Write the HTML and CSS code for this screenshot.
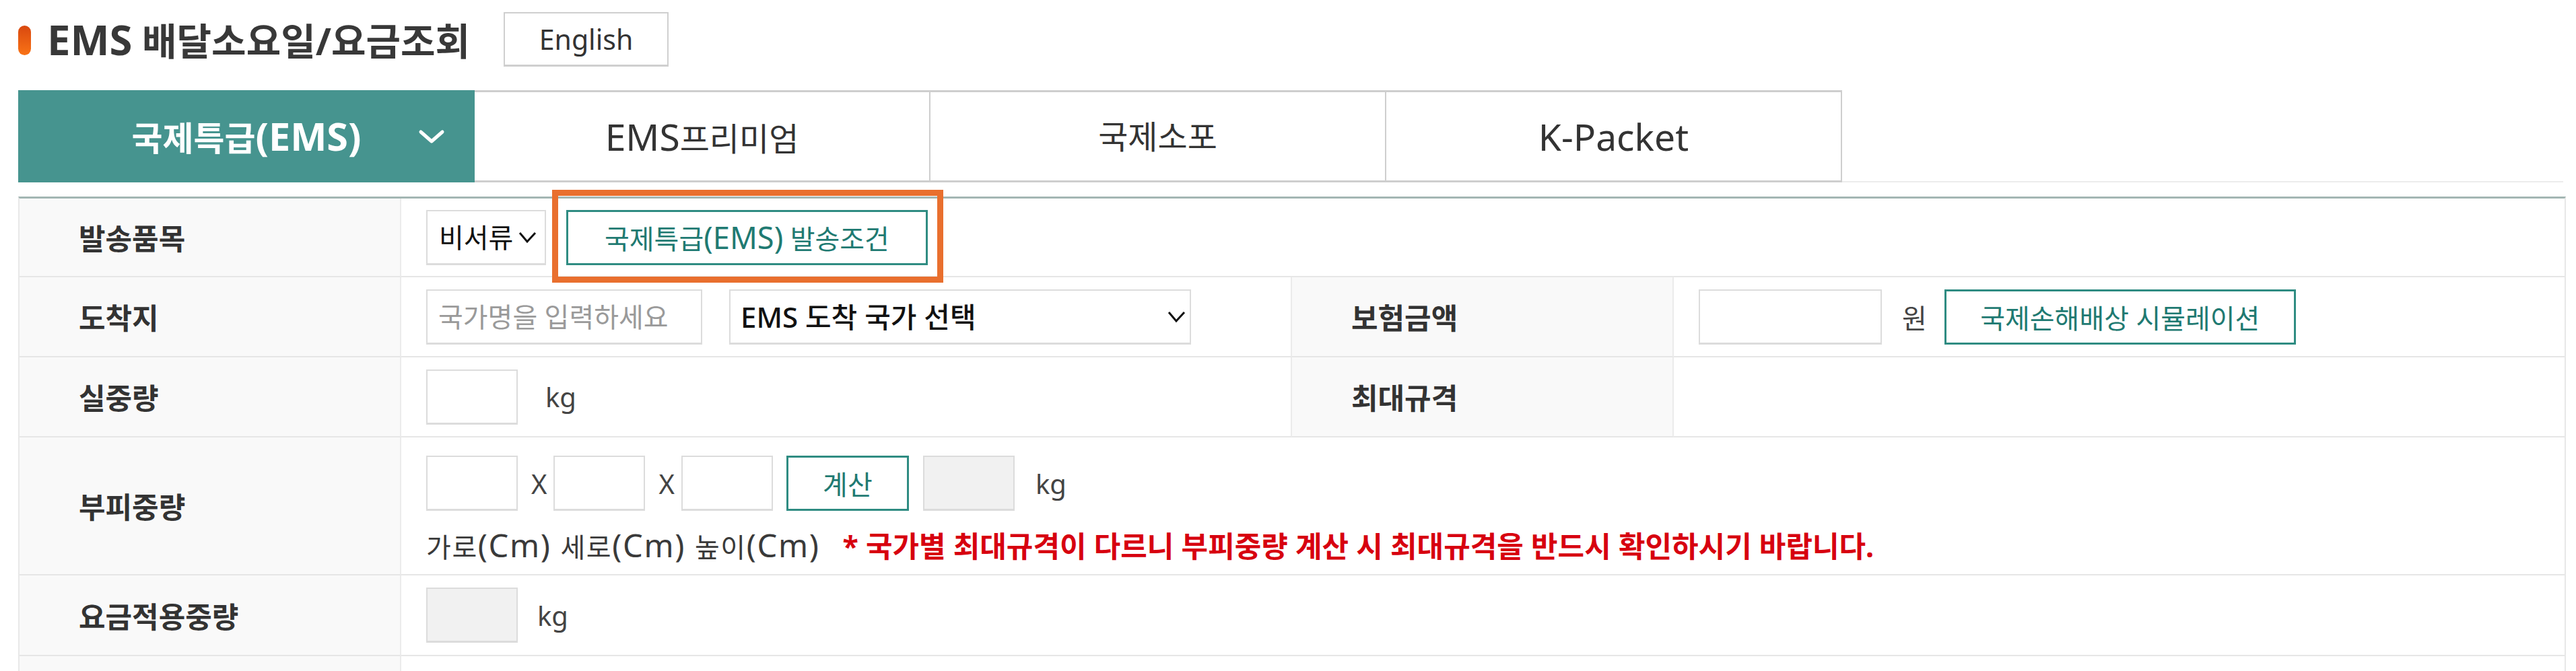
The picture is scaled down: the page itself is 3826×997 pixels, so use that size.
FILE: index.html
```html
<!DOCTYPE html>
<html lang="ko">
<head>
<meta charset="utf-8">
<title>EMS 배달소요일/요금조회</title>
<link rel="stylesheet" href="styles.css">
</head>
<body>
<div class="page">
  <div class="header">
    <span class="pill"></span>
    <h1 class="title"><span class="lat">EMS</span> 배달소요일/요금조회</h1>
    <button class="btn-lang" type="button">English</button>
  </div>

  <ul class="tabs">
    <li class="tab active">
      <span class="tab-label">국제특급<span class="lat">(EMS)</span></span>
      <svg class="tab-chev" width="40" height="22" viewBox="0 0 40 22"><polyline points="4,4 20,18 36,4" fill="none" stroke="#fff" stroke-width="5" stroke-linecap="round" stroke-linejoin="round"/></svg>
    </li>
    <li class="tab"><span class="tab-label"><span class="lat">EMS</span>프리미엄</span></li>
    <li class="tab"><span class="tab-label">국제소포</span></li>
    <li class="tab"><span class="tab-label"><span class="lat">K-Packet</span></span></li>
  </ul>

  <table class="form">
    <colgroup>
      <col class="c-label"><col class="c-value"><col class="c-label"><col class="c-value">
    </colgroup>
    <tbody>
      <tr class="r1">
        <th>발송품목</th>
        <td colspan="3">
          <div class="line">
            <label class="select select-sm">
              <select><option>비서류</option></select>
              <svg class="sel-chev" width="30" height="20" viewBox="0 0 30 20"><polyline points="3,4 14,17 26,4" fill="none" stroke="#111" stroke-width="3"/></svg>
            </label>
            <span class="btn-wrap">
              <button class="btn" type="button">국제특급<span class="lat">(EMS)</span> 발송조건</button>
              <span class="mark"></span>
            </span>
          </div>
        </td>
      </tr>
      <tr>
        <th>도착지</th>
        <td>
          <div class="line">
            <input class="inp inp-country" type="text" placeholder="국가명을 입력하세요">
            <label class="select select-lg">
              <select><option>EMS 도착 국가 선택</option></select>
              <svg class="sel-chev" width="30" height="20" viewBox="0 0 30 20"><polyline points="3,4 14,17 26,4" fill="none" stroke="#111" stroke-width="3"/></svg>
            </label>
          </div>
        </td>
        <th>보험금액</th>
        <td>
          <div class="line">
            <input class="inp inp-money" type="text">
            <span class="unit unit-won">원</span>
            <button class="btn btn-sim" type="button">국제손해배상 시뮬레이션</button>
          </div>
        </td>
      </tr>
      <tr>
        <th>실중량</th>
        <td>
          <div class="line">
            <input class="inp inp-sm" type="text">
            <span class="unit unit-kg">kg</span>
          </div>
        </td>
        <th>최대규격</th>
        <td></td>
      </tr>
      <tr class="r4">
        <th>부피중량</th>
        <td colspan="3">
          <div class="line">
            <input class="inp inp-sm" type="text">
            <span class="times">X</span>
            <input class="inp inp-sm" type="text">
            <span class="times">X</span>
            <input class="inp inp-sm" type="text">
            <button class="btn btn-calc" type="button">계산</button>
            <input class="inp inp-sm inp-ro" type="text" readonly>
            <span class="unit unit-kg2">kg</span>
          </div>
          <p class="dims">가로<span class="lat">(Cm)</span> 세로<span class="lat">(Cm)</span> 높이<span class="lat">(Cm)</span><span class="warn">* 국가별 최대규격이 다르니 부피중량 계산 시 최대규격을 반드시 확인하시기 바랍니다.</span></p>
        </td>
      </tr>
      <tr class="r5">
        <th>요금적용중량</th>
        <td colspan="3">
          <div class="line">
            <input class="inp inp-sm inp-ro" type="text" readonly>
            <span class="unit unit-kg3">kg</span>
          </div>
        </td>
      </tr>
      <tr>
        <th></th>
        <td colspan="3"></td>
      </tr>
    </tbody>
  </table>
</div>
</body>
</html>
```

FILE: styles.css
```css
* { box-sizing: border-box; }

html, body {
  margin: 0;
  padding: 0;
  background: #fff;
}

body {
  font-family: "Noto Sans", "Noto Sans CJK KR", sans-serif;
  font-size: 40px;
  color: #333;
  overflow: hidden;
}

.page {
  padding-left: 27px;
  width: 3807px;
}

/* Latin runs render a little larger than the Hangul around them */
.lat { font-size: 1.13em; }

/* header */
.header {
  display: flex;
  align-items: center;
  height: 81px;
  margin-top: 18px;
}

.pill {
  width: 19px;
  height: 44px;
  border-radius: 10px;
  background: linear-gradient(#d9480f, #f97316);
  margin-top: 2px;
}

.title {
  margin: 0 0 0 24px;
  font-size: 56px;
  font-weight: 700;
  color: #383838;
  line-height: 1.2;
}

.title .lat { font-size: 1.1em; }

.btn-lang {
  margin-left: 50px;
  width: 245px;
  height: 81px;
  background: #fff;
  border: 2px solid #cfcfcf;
  border-bottom-width: 3px;
  font-family: inherit;
  font-size: 41px;
  color: #333;
  padding: 0;
}

/* tabs */
.tabs {
  list-style: none;
  margin: 35px 0 0;
  padding: 0;
  display: flex;
  border-bottom: 2px solid #ececec;
  width: 3780px;
}

.tab {
  display: grid;
  grid-template-columns: 1fr auto 1fr;
  align-items: center;
  width: 677px;
  height: 137px;
  margin-bottom: -2px;
  border-top: 3px solid #cecece;
  border-bottom: 3px solid #cecece;
  border-right: 2px solid #cecece;
  font-size: 48px;
  color: #333;
  background: #fff;
}

.tab-label {
  grid-column: 2;
  line-height: 1;
}

.tab .lat { font-size: 1.15em; }

.tab.active {
  width: 678px;
  background: #46948f;
  border: 0;
  color: #fff;
  font-weight: 700;
  font-size: 50px;
}

.tab-chev {
  grid-column: 3;
  justify-self: end;
  margin-right: 44px;
}

/* form table */
.form {
  margin-top: 21px;
  width: 3780px;
  table-layout: fixed;
  border-collapse: separate;
  border-spacing: 0;
  border-top: 3px solid #a3b6b3;
  border-left: 2px solid #e8e8e8;
  border-right: 2px solid #e8e8e8;
}

.c-label { width: 567px; }
.c-value { width: 1323px; }

.form th,
.form td {
  height: 119px;
  padding: 0;
  border-bottom: 2px solid #e6e6e6;
  vertical-align: middle;
}

.form th {
  background: #f9f9f9;
  text-align: left;
  padding-left: 88px;
  font-weight: 700;
  font-size: 43px;
  color: #333;
  border-right: 2px solid #ebebeb;
}

.form td {
  padding-left: 37px;
}

.form td:nth-child(2):not([colspan]) {
  border-right: 2px solid #ebebeb;
}

.form .r1 th,
.form .r1 td { height: 117px; }

.form .r4 th,
.form .r4 td { height: 205px; }

.form .r4 td {
  padding-top: 14px;
}

.form .r5 th,
.form .r5 td { height: 120px; }

.line {
  display: flex;
  align-items: center;
}

/* controls */
.inp {
  height: 82px;
  border: 2px solid #dcdcdc;
  border-bottom-width: 3px;
  background: #fff;
  font-family: inherit;
  font-size: 40px;
  padding: 0 16px;
  color: #333;
  outline: none;
}

.inp::placeholder { color: #9a9a9a; }

.inp-sm { width: 136px; }
.inp-country { width: 410px; }
.inp-money { width: 272px; }
.inp-ro { background: #f1f1f1; }

.select {
  display: flex;
  align-items: center;
  height: 82px;
  border: 2px solid #dcdcdc;
  border-bottom-width: 3px;
  background: #fff;
}

.select select {
  appearance: none;
  -webkit-appearance: none;
  border: 0;
  background: transparent;
  font-family: inherit;
  font-size: 40px;
  color: #111;
  padding: 0;
  outline: none;
}

.select-sm {
  width: 178px;
  padding: 0 4px 0 17px;
  gap: 6px;
}

.select-lg {
  width: 686px;
  margin-left: 40px;
  padding: 0 4px 0 15px;
}

.select-lg select {
  flex: 1;
  font-size: 42px;
  font-weight: 500;
}

.btn {
  height: 82px;
  padding: 0 54px;
  border: 3px solid #2f8c82;
  background: #fff;
  color: #1f7a72;
  font-family: inherit;
  font-size: 40px;
  white-space: nowrap;
}

.btn-wrap {
  position: relative;
  display: inline-flex;
  margin-left: 30px;
}

.mark {
  position: absolute;
  left: -21px;
  right: -23px;
  top: -30px;
  bottom: -26px;
  border: 9px solid #e96f2e;
  pointer-events: none;
}

.unit { color: #444; }

.unit-won { margin: 0 26px 0 30px; }
.unit-kg { margin-left: 41px; }
.unit-kg2 { margin-left: 31px; }
.unit-kg3 { margin-left: 29px; }

.btn-sim {
  width: 522px;
  padding: 0;
}

.times {
  margin: 0 10px 0 20px;
  color: #444;
}

.btn-calc {
  width: 182px;
  padding: 0;
  margin: 0 21px 0 20px;
}

.dims {
  margin: 24px 0 0;
  line-height: 54px;
  color: #3a3a3a;
  word-spacing: 2px;
  letter-spacing: 1.6px;
}

.dims .lat { font-size: 1.18em; }

.warn {
  margin-left: 34px;
  color: #d7000f;
  font-weight: 700;
  font-size: 43px;
  word-spacing: 0;
  letter-spacing: 0;
}
```
